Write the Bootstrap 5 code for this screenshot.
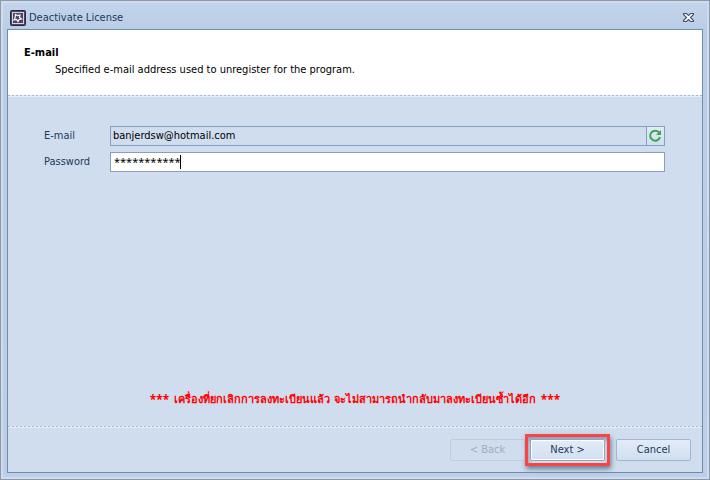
<!DOCTYPE html>
<html lang="en">
<head>
<meta charset="utf-8">
<meta name="viewport" content="width=device-width, initial-scale=1">
<title>Deactivate License</title>
<link href="https://cdn.jsdelivr.net/npm/bootstrap@5.3.0/dist/css/bootstrap.min.css" rel="stylesheet">
<style>
  body { font-family: Tahoma, "DejaVu Sans Condensed", "DejaVu Sans", sans-serif; font-size: 11px; line-height: 14px; color: #000; }
  .window { background: linear-gradient(#c3d5ec, #b9cde6 30px, #bdcfe8); border: 1px solid #8e98a8; box-shadow: inset 0 0 0 2px #cfdcee; padding: 0 6px 6px; }
  .titlebar { height: 28px; padding: 5px 8px 0 3px; color: #1e395b; gap: 3px; }
  .title-close { width: 14px; height: 14px; }
  .pane { border: 1px solid #6f8dae; background: #cfddee; }
  .intro { background: #fff; height: 65px; padding: 16px 16px 0; }
  .intro h1 { font-size: 11px; line-height: 14px; margin-bottom: 3px; }
  .intro p { padding-left: 31px; }
  .dashes { height: 2px; flex: none; background: linear-gradient(#e6eef8, #e6eef8) 0 1px / 100% 1px no-repeat, repeating-linear-gradient(90deg, #a9b8cd 0 2px, #dfe8f3 2px 4px); }
  .fields { padding: 29px 37px 0 36px; gap: 6px; }
  .fields label { width: 66px; flex: none; color: #1e395b; }
  .field { height: 20px; border: 1px solid #869fbf; }
  .field input { border-radius: 0; border: 0; padding: 0 2px; font-size: 11px; line-height: 14px; min-height: 0; color: #000; background: transparent; box-shadow: none; }
  .entry { background: #fff; }
  .entry input { font-family: "Noto Sans", sans-serif; padding: 0 3px; }
  .caret { position: absolute; left: 69px; top: 2px; width: 1px; height: 14px; background: #000; }
  .refresh { width: 19px; border-left: 1px solid #869fbf !important; background: linear-gradient(#e1ebf6, #cfdff0); }
  .warning { color: #f00; font-weight: bold; line-height: 18px; padding-bottom: 17px; gap: 5px; }
  .stars { font-family: "Noto Sans", sans-serif; font-size: 12px; }
  .actions { padding: 6px 11px 6px; }
  .actions .btn { width: 75px; height: 22px; padding: 0; border-radius: 2px; font-size: 11px; line-height: 14px; color: #1e395b; border: 1px solid #a3b6d0; background: linear-gradient(#e3ecf7, #d0dff0); }
  .actions .btn:disabled { color: #8795aa; border-color: #b4c3d7; background: #cfdded; }
  .actions .btn-next { border-color: #8ea4c1; box-shadow: inset 0 0 0 1px #fff; }
  .actions .cancel { margin-left: 6px; }
  .spotlight { border: 3px solid #fa4444; padding: 2px; box-shadow: 1px 3px 5px #6b7d94, inset 1px 3px 4px #8a9bb2; }
</style>
</head>
<body>
<main class="window vh-100 d-flex flex-column">
  <header class="titlebar d-flex align-items-center">
    <svg width="16" height="16" viewBox="0 0 16 16" aria-hidden="true">
      <rect x=".5" y=".5" width="15" height="15" rx="1" fill="#4b4464" stroke="#2c263f"/>
      <rect x="2.500" y="2.500" width="11" height="11" fill="#4b4464" stroke="#d9d4e2"/>
      <path d="M5.500 4.500l2 1 2.500-.500-.500 2.500 2 1.500-2.500.500-1 2-1.500-2-2.500.500 1-2z" fill="none" stroke="#fff" stroke-width="1.200"/>
    </svg>
    <span>Deactivate License</span>
    <button class="title-close btn border-0 p-0 ms-auto d-flex align-items-center justify-content-center" type="button" aria-label="Close">
      <svg width="13" height="11" viewBox="0 0 13 11">
        <path d="M1.500 1.500h3l2 2 2-2h3v1l-3 3 3 3v1h-3l-2-2-2 2h-3v-1l3-3-3-3z" fill="#fff" stroke="#45526b" stroke-width="1.100"/>
      </svg>
    </button>
  </header>
  <div class="pane flex-grow-1 d-flex flex-column">
    <section class="intro">
      <h1 class="fw-bold">E-mail</h1>
      <p class="mb-0">Specified e-mail address used to unregister for the program.</p>
    </section>
    <div class="dashes"></div>
    <form class="fields d-flex flex-column flex-grow-1">
      <div class="d-flex align-items-center">
        <label for="email">E-mail</label>
        <div class="field d-flex flex-grow-1">
          <input class="form-control" id="email" type="text" value="banjerdsw@hotmail.com" readonly>
          <button class="refresh border-0 p-0 d-flex align-items-center justify-content-center" type="button" aria-label="Refresh">
            <svg width="14" height="14" viewBox="0 0 14 14">
              <path d="M11 3.500A5 5 0 1 0 12 8" fill="none" stroke="#3fa650" stroke-width="2"/>
              <path d="M13 1v5H8z" fill="#3fa650"/>
            </svg>
          </button>
        </div>
      </div>
      <div class="d-flex align-items-center">
        <label for="password">Password</label>
        <div class="field entry d-flex flex-grow-1 position-relative">
          <input class="form-control" id="password" type="text" autocomplete="off" value="***********">
          <span class="caret"></span>
        </div>
      </div>
    </form>
    <p class="warning d-flex justify-content-center mb-0" lang="th"><span class="stars">***</span><span>เครื่องที่ยกเลิกการลงทะเบียนแล้ว จะไม่สามารถนำกลับมาลงทะเบียนซ้ำได้อีก</span><span class="stars">***</span></p>
    <div class="dashes"></div>
    <footer class="actions d-flex justify-content-end align-items-center">
      <button class="btn" type="button" disabled>&lt; Back</button>
      <div class="spotlight d-flex">
        <button class="btn btn-next" type="button">Next &gt;</button>
      </div>
      <button class="btn cancel" type="button">Cancel</button>
    </footer>
  </div>
</main>
<script src="https://cdn.jsdelivr.net/npm/bootstrap@5.3.0/dist/js/bootstrap.bundle.min.js"></script>
</body>
</html>
